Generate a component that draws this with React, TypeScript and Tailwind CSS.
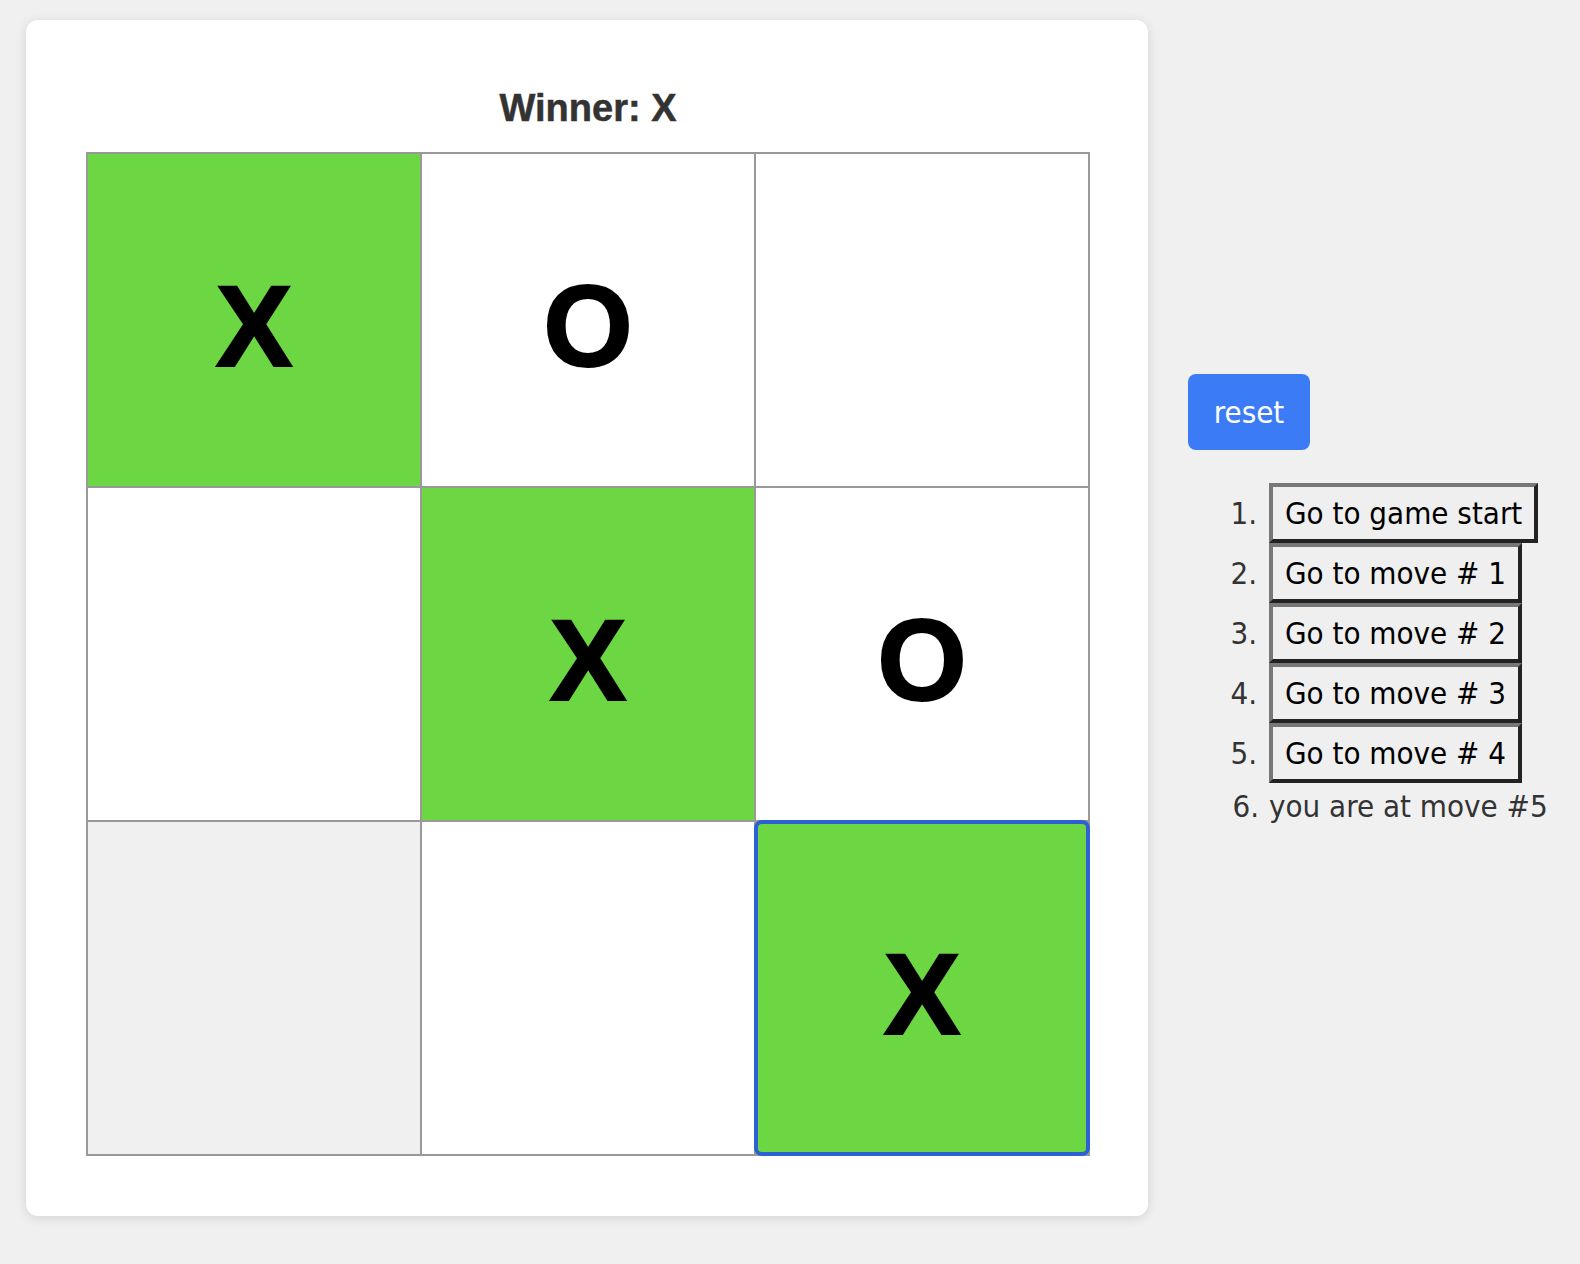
import { useState } from "react";

type Mark = "X" | "O" | null;

const board: Mark[] = ["X", "O", null, null, "X", "O", null, null, "X"];
const winLine = [0, 4, 8];
const moves = ["Go to game start", "Go to move # 1", "Go to move # 2", "Go to move # 3", "Go to move # 4"];

const uiFont = { fontFamily: '"DejaVu Sans Condensed", "DejaVu Sans", sans-serif' };

function Cell({ value, index, hovered, focused }: { value: Mark; index: number; hovered: boolean; focused: boolean }) {
  const win = winLine.includes(index);
  const bg = win ? "bg-[#6cd643]" : hovered ? "bg-[#f0f0f0]" : "bg-white";
  return (
    <button
      type="button"
      className={`h-[332px] flex items-center justify-center pt-[12px] text-[115px] font-bold text-black leading-none [-webkit-text-stroke:2px_black] font-['Liberation_Sans',Arial,sans-serif] ${bg} ${
        focused ? "relative rounded-[6px] outline-4 outline-[#2b61d4] -outline-offset-2" : ""
      }`}
    >
      {value}
    </button>
  );
}

export default function App() {
  const [step] = useState(5);

  return (
    <div className="min-h-screen bg-[#f0f0f0] flex items-start gap-[40px] pl-[26px] pt-[20px]">
      <div className="bg-white rounded-[12px] shadow-[0_2px_12px_rgba(0,0,0,0.12)] pt-[60px] pb-[60px] pl-[60px] pr-[58px]">
        <div className="h-[56px] mb-[16px] flex items-center justify-center text-[38px] font-bold text-[#333] [-webkit-text-stroke:0.5px_#333] font-['Liberation_Sans',Arial,sans-serif]">
          Winner: X
        </div>
        <div className="grid grid-cols-3 gap-[2px] bg-[#999] p-[2px] w-[1004px]">
          {board.map((v, i) => (
            <Cell key={i} value={v} index={i} hovered={i === 6} focused={i === 8} />
          ))}
        </div>
      </div>

      <div className="mt-[354px] flex flex-col" style={uiFont}>
        <button
          type="button"
          className="w-[122px] h-[76px] rounded-[8px] bg-[#3b7cf6] text-white text-[31px] flex items-center justify-center"
        >
          reset
        </button>
        <ol className="mt-[33px] text-[31px] text-[#333]">
          {moves.map((label, i) => (
            <li key={i} className="flex items-center h-[60px]">
              <span className="w-[81px] pr-[12px] text-right">{i + 1}.</span>
              <button
                type="button"
                className="h-[60px] px-[12px] bg-[#efefef] text-black border-4 border-t-[#777] border-l-[#777] border-b-[#222] border-r-[#222]"
              >
                {label}
              </button>
            </li>
          ))}
          <li className="flex items-center h-[47px]">
            <span className="w-[81px] pr-[10px] text-right">{step + 1}.</span>
            <span>you are at move #{step}</span>
          </li>
        </ol>
      </div>
    </div>
  );
}
